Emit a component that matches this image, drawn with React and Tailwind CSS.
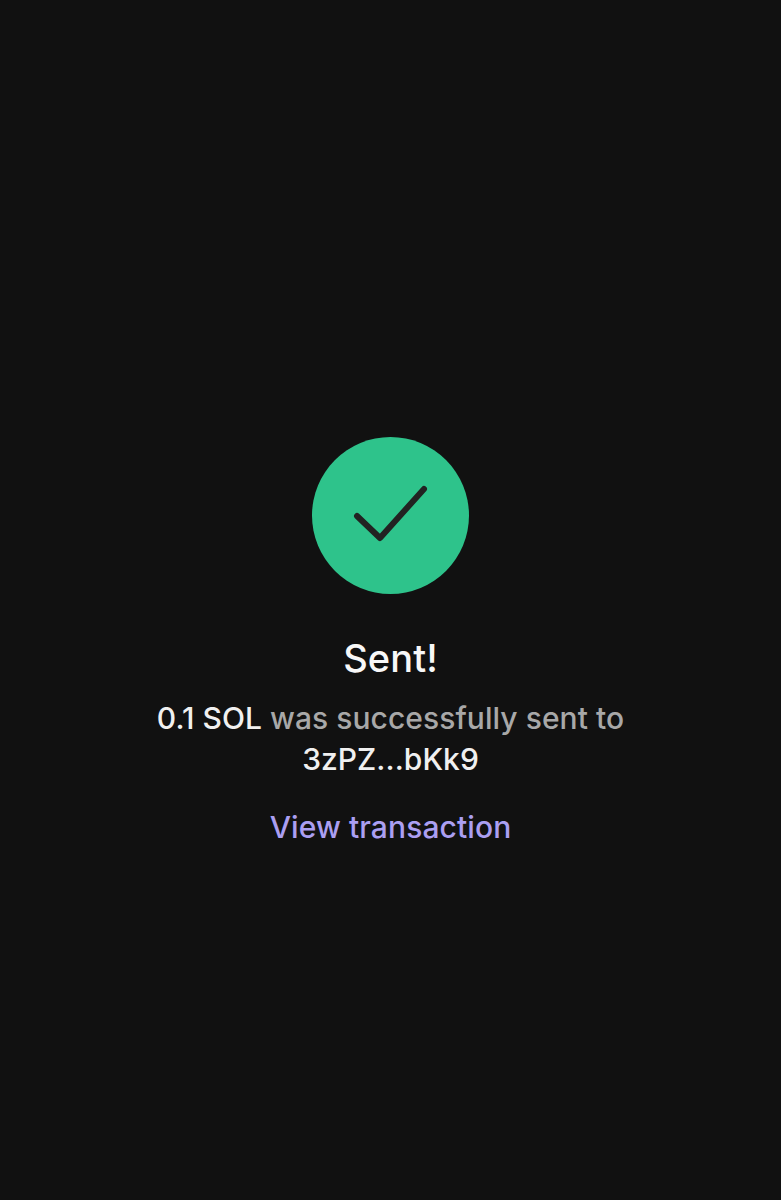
export default function App() {
    return (
        <div className="h-[1200px] bg-[#111111] flex flex-col items-center pt-[437px] font-['Inter',sans-serif]">
            <div className="w-[157px] h-[157px] rounded-full bg-[#2ec38b] flex items-center justify-center">
                <svg width="157" height="157" viewBox="0 0 157 157" fill="none">
                    <path d="M45 79 L68 101 L112 52" stroke="#222222" strokeWidth="6" strokeLinecap="round" strokeLinejoin="round" />
                </svg>
            </div>
            <h1 className="mt-[39px] text-[38px] leading-[50px] font-medium tracking-[0.1px] text-[#f8f8f8]">Sent!</h1>
            <p className="mt-[15px] w-[520px] text-center text-[30px] leading-[41px] font-medium tracking-[0.05px] text-[#a8a8a8]">
                <span className="text-[#f0f0f0]">0.1 SOL</span> was successfully sent to <span className="text-[#f0f0f0]">3zPZ...bKk9</span>
            </p>
            <a className="mt-[26px] text-[30px] leading-[42px] font-medium tracking-[0.1px] text-[#ab9ff2]">View transaction</a>
        </div>
    );
}
